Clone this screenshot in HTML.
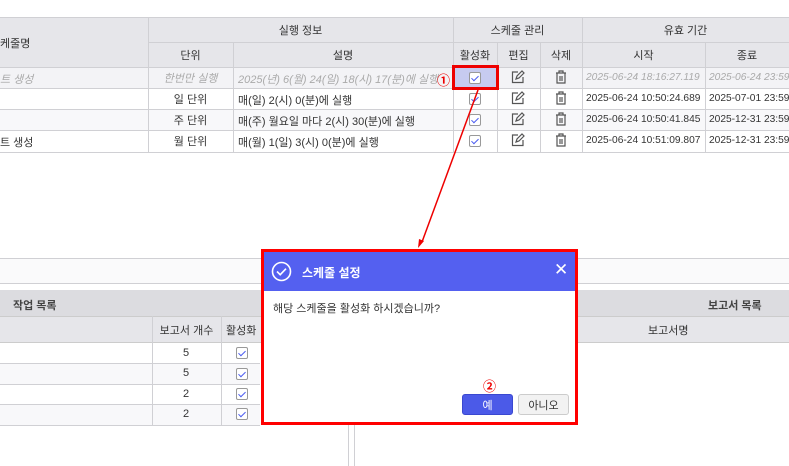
<!DOCTYPE html>
<html><head><meta charset="utf-8"><style>
*{box-sizing:border-box;margin:0;padding:0}
body{width:789px;height:466px;overflow:hidden;background:#fff;font-family:"Liberation Sans","Noto Sans CJK KR",sans-serif;font-size:11px;color:#333;position:relative}
.a{position:absolute}
.c{display:flex;align-items:center;justify-content:center}
.h{background:#e6e6ea}
.vl{position:absolute;width:1px;background:#d0d0d4}
.hl{position:absolute;height:1px;background:#d0d0d4}
.cb{position:absolute;width:12px;height:12px;border:1px solid #999;border-radius:2px;background:#fff}
.cb:after{content:"";position:absolute;left:3px;top:1px;width:3px;height:6px;border:solid #4b5cf0;border-width:0 1.5px 1.5px 0;transform:rotate(45deg)}
.it{color:#aaa;font-style:italic}
.d{font-size:10.2px;white-space:nowrap}
</style></head><body>
<div class="a h" style="left:0;top:17px;width:789px;height:50px"></div>
<div class="a" style="left:0;top:67px;width:789px;height:21px;background:#f3f3f6"></div>
<div class="a" style="left:0;top:109px;width:789px;height:21px;background:#f8f8fa"></div>
<div class="hl" style="left:0;top:17px;width:789px"></div>
<div class="hl" style="left:148px;top:42px;width:641px"></div>
<div class="hl" style="left:0;top:67px;width:789px"></div>
<div class="hl" style="left:0;top:88px;width:789px"></div>
<div class="hl" style="left:0;top:109px;width:789px"></div>
<div class="hl" style="left:0;top:130px;width:789px"></div>
<div class="hl" style="left:0;top:152px;width:789px"></div>
<div class="vl" style="left:148px;top:17px;height:135px"></div>
<div class="vl" style="left:233px;top:42px;height:110px"></div>
<div class="vl" style="left:453px;top:17px;height:135px"></div>
<div class="vl" style="left:497px;top:42px;height:110px"></div>
<div class="vl" style="left:540px;top:42px;height:110px"></div>
<div class="vl" style="left:582px;top:17px;height:135px"></div>
<div class="vl" style="left:705px;top:42px;height:110px"></div>
<div class="a" style="left:0;top:35px">케줄명</div>
<div class="a c" style="left:148px;top:17px;width:305px;height:25px">실행 정보</div>
<div class="a c" style="left:453px;top:17px;width:129px;height:25px">스케줄 관리</div>
<div class="a c" style="left:582px;top:17px;width:207px;height:25px">유효 기간</div>
<div class="a c" style="left:148px;top:42px;width:85px;height:25px">단위</div>
<div class="a c" style="left:233px;top:42px;width:220px;height:25px">설명</div>
<div class="a c" style="left:453px;top:42px;width:44px;height:25px">활성화</div>
<div class="a c" style="left:497px;top:42px;width:43px;height:25px">편집</div>
<div class="a c" style="left:540px;top:42px;width:42px;height:25px">삭제</div>
<div class="a c" style="left:582px;top:42px;width:123px;height:25px">시작</div>
<div class="a c" style="left:705px;top:42px;width:84px;height:25px">종료</div>
<div class="a it" style="left:0;top:71px">트 생성</div>
<div class="a" style="left:0;top:134px">트 생성</div>
<div class="a c it" style="left:148px;top:67px;width:85px;height:21px">한번만 실행</div>
<div class="a c" style="left:148px;top:88px;width:85px;height:21px">일 단위</div>
<div class="a c" style="left:148px;top:109px;width:85px;height:21px">주 단위</div>
<div class="a c" style="left:148px;top:130px;width:85px;height:21px">월 단위</div>
<div class="a it" style="left:238px;top:71px">2025(년) 6(월) 24(일) 18(시) 17(분)에 실행</div>
<div class="a" style="left:238px;top:92px">매(일) 2(시) 0(분)에 실행</div>
<div class="a" style="left:238px;top:113px">매(주) 월요일 마다 2(시) 30(분)에 실행</div>
<div class="a" style="left:238px;top:134px">매(월) 1(일) 3(시) 0(분)에 실행</div>
<div class="a" style="left:437px;top:70px;color:#e00;font-weight:bold;font-size:13px">①</div>
<div class="a" style="left:454px;top:68px;width:43px;height:20px;background:#c7cbf0"></div>
<div class="cb" style="left:469px;top:72px"></div>
<div class="cb" style="left:469px;top:93px"></div>
<div class="cb" style="left:469px;top:114px"></div>
<div class="cb" style="left:469px;top:135px"></div>
<div class="a" style="left:452px;top:65px;width:47px;height:25px;border:3px solid #e00"></div>
<svg class="a" style="left:511px;top:70px" width="14" height="80"><g fill="none" stroke="#555" stroke-width="1.2"><g id="e"><path d="M7 2H1.5v10.5H12V7"/><path d="M5 9l1-3 5-5 2 2-5 5z"/></g><use href="#e" y="21"/><use href="#e" y="42"/><use href="#e" y="63"/></g></svg>
<svg class="a" style="left:554px;top:70px" width="14" height="80"><g fill="none" stroke="#555" stroke-width="1.2"><path d="M2 3h10M5 3V1h4v2M3 3v10h8V3M6 6v5M8 6v5"/><path transform="translate(0,21)" d="M2 3h10M5 3V1h4v2M3 3v10h8V3M6 6v5M8 6v5"/><path transform="translate(0,42)" d="M2 3h10M5 3V1h4v2M3 3v10h8V3M6 6v5M8 6v5"/><path transform="translate(0,63)" d="M2 3h10M5 3V1h4v2M3 3v10h8V3M6 6v5M8 6v5"/></g></svg>
<div class="a it d" style="left:586px;top:72px">2025-06-24 18:16:27.119</div>
<div class="a d" style="left:586px;top:93px">2025-06-24 10:50:24.689</div>
<div class="a d" style="left:586px;top:114px">2025-06-24 10:50:41.845</div>
<div class="a d" style="left:586px;top:135px">2025-06-24 10:51:09.807</div>
<div class="a it d" style="left:709px;top:72px">2025-06-24 23:59</div>
<div class="a d" style="left:709px;top:93px">2025-07-01 23:59</div>
<div class="a d" style="left:709px;top:114px">2025-12-31 23:59</div>
<div class="a d" style="left:709px;top:135px">2025-12-31 23:59</div>
<div class="a" style="left:0;top:258px;width:789px;height:26px;background:#fafafb;border-top:1px solid #d0d0d4;border-bottom:1px solid #d0d0d4"></div>
<div class="a" style="left:0;top:290px;width:789px;height:26px;background:#dcdce0"></div>
<div class="a h" style="left:0;top:316px;width:789px;height:27px;border-top:1px solid #ccc;border-bottom:1px solid #ccc"></div>
<div class="a" style="left:0;top:363px;width:260px;height:21px;background:#f8f8fa"></div>
<div class="a" style="left:0;top:404px;width:260px;height:21px;background:#f8f8fa"></div>
<div class="hl" style="left:0;top:363px;width:260px"></div>
<div class="hl" style="left:0;top:384px;width:260px"></div>
<div class="hl" style="left:0;top:404px;width:260px"></div>
<div class="hl" style="left:0;top:425px;width:260px"></div>
<div class="vl" style="left:152px;top:316px;height:109px"></div>
<div class="vl" style="left:221px;top:316px;height:109px"></div>
<div class="vl" style="left:348px;top:425px;height:41px"></div>
<div class="vl" style="left:354px;top:425px;height:41px"></div>
<div class="a" style="left:13px;top:297px;font-weight:bold;color:#444">작업 목록</div>
<div class="a" style="left:708px;top:297px;font-weight:bold;color:#444">보고서 목록</div>
<div class="a c" style="left:152px;top:316px;width:69px;height:27px">보고서 개수</div>
<div class="a" style="left:226px;top:322px">활성화</div>
<div class="a" style="left:648px;top:322px">보고서명</div>
<div class="a" style="left:183px;top:347px">5</div>
<div class="a" style="left:183px;top:367px">5</div>
<div class="a" style="left:183px;top:388px">2</div>
<div class="a" style="left:183px;top:408px">2</div>
<div class="cb" style="left:236px;top:347px"></div>
<div class="cb" style="left:236px;top:368px"></div>
<div class="cb" style="left:236px;top:388px"></div>
<div class="cb" style="left:236px;top:408px"></div>
<svg class="a" style="left:0;top:0" width="789" height="466"><line x1="478" y1="90" x2="422" y2="242" stroke="#e00" stroke-width="1.5"/><path d="M418 248l1-9 5 2z" fill="#e00"/></svg>
<div class="a" style="left:261px;top:249px;width:317px;height:176px;border:3px solid #f00;background:#fff">
<div style="height:39px;background:#5460f0;color:#fff;position:relative">
<svg class="a" style="left:7px;top:9px" width="21" height="21"><circle cx="10.5" cy="10.5" r="9" fill="none" stroke="#fff" stroke-width="1.6"/><path d="M6 10.5l3.2 3.2 5.8-6" fill="none" stroke="#fff" stroke-width="1.6"/></svg>
<div class="a" style="left:38px;top:12px;font-weight:bold;font-size:12px">스케줄 설정</div>
<div class="a" style="left:290px;top:8px;font-size:17px">✕</div>
</div>
<div class="a" style="left:9px;top:48px">해당 스케줄을 활성화 하시겠습니까?</div>
<div class="a" style="left:219px;top:124px;color:#e00;font-weight:bold;font-size:13px">②</div>
<div class="a c" style="left:198px;top:142px;width:51px;height:21px;background:#4b5ae8;border-radius:3px;color:#fff;border:1px solid #3a48d0">예</div>
<div class="a c" style="left:254px;top:142px;width:51px;height:21px;background:#f2f2f2;border-radius:3px;border:1px solid #ccc">아니오</div>
</div>
</body></html>
